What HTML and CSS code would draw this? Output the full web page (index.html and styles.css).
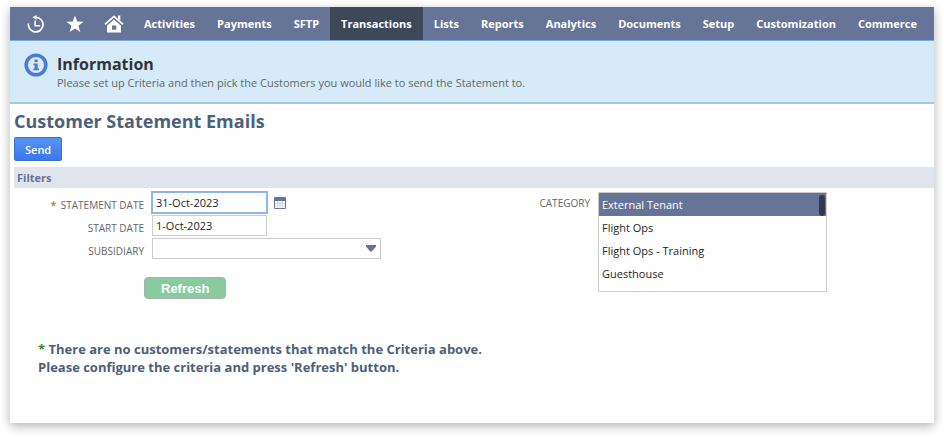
FILE: index.html
```html
<!DOCTYPE html>
<html lang="en">
<head>
<meta charset="utf-8">
<meta name="viewport" content="width=device-width, initial-scale=1">
<title>Customer Statement Emails</title>
<link rel="stylesheet" href="styles.css">
</head>
<body>
<div class="window">
  <nav class="nav" aria-label="Main">
    <a class="nav-icon" href="#" aria-label="Recent records">
      <svg width="18" height="18" viewBox="0 0 18 18" fill="none" stroke="#fff"><path d="M1.500 8.500A7.300 7.300 0 1 0 9 2.300H7" stroke-width="1.700"/><path d="M9.500 0 5.500 2.300 9.500 5z" fill="#fff" stroke="none"/><path d="M8.200 5.500v5.200h5" stroke-width="1.600"/></svg>
    </a>
    <a class="nav-icon" href="#" aria-label="Shortcuts">
      <svg width="18" height="18" viewBox="0 0 18 18" fill="#fff"><path d="M9 .5 11.200 6.600 17.600 6.800 12.500 10.800 14.300 17 9 13.400 3.700 17 5.500 10.800.4 6.800 6.800 6.600z"/></svg>
    </a>
    <a class="nav-icon" href="#" aria-label="Home">
      <svg width="20" height="18" viewBox="0 0 20 18"><path d="M1 9.400 10 1.400l9 8" fill="none" stroke="#fff" stroke-width="1.800"/><path d="M14 .6h2.300v5L14 3.600z" fill="#fff"/><path d="M10 4.500 17 10.700V17.500H3v-6.800zM8 10.500v4.300h4.300v-4.300z" fill="#fff" fill-rule="evenodd"/></svg>
    </a>
    <a class="nav-link" href="#">Activities</a>
    <a class="nav-link" href="#">Payments</a>
    <a class="nav-link" href="#">SFTP</a>
    <a class="nav-link nav-link-active" href="#" aria-current="page">Transactions</a>
    <a class="nav-link" href="#">Lists</a>
    <a class="nav-link" href="#">Reports</a>
    <a class="nav-link" href="#">Analytics</a>
    <a class="nav-link" href="#">Documents</a>
    <a class="nav-link" href="#">Setup</a>
    <a class="nav-link" href="#">Customization</a>
    <a class="nav-link" href="#">Commerce</a>
  </nav>

  <section class="info">
    <svg class="info-icon" width="24" height="24" viewBox="0 0 24 24"><circle cx="12" cy="12" r="9.800" fill="#dbe9fb" stroke="#4c7bd6" stroke-width="3.600"/><path d="M10.500 6.500h3.200v2.600h-3.200zM9.500 10.500h4.200v5h1.300v1.800H9.300v-1.800h1.300v-3.200H9.500z" fill="#4c7bd6"/></svg>
    <div>
      <h2 class="info-title">Information</h2>
      <p class="info-text">Please set up Criteria and then pick the Customers you would like to send the Statement to.</p>
    </div>
  </section>

  <main class="page">
    <h1 class="page-title">Customer Statement Emails</h1>
    <button class="send" type="button">Send</button>
    <h2 class="section-title">Filters</h2>
    <form class="filters">
      <div class="column">
        <div class="row">
          <label class="label" for="statement-date"><span class="required">*</span> STATEMENT DATE</label>
          <input class="field date field-active" id="statement-date" type="text" value="31-Oct-2023">
          <button class="calendar" type="button" aria-label="Pick a date">
            <svg width="12" height="12" viewBox="0 0 12 12"><rect width="12" height="12" rx="1" fill="#66749b"/><path d="M1 4h10v7H1z" fill="#fff"/><path d="M3.500 4v7M6 4v7M8.500 4v7M1 6.300h10M1 8.700h10" stroke="#b4bcd0" stroke-width=".6"/></svg>
          </button>
        </div>
        <div class="row">
          <label class="label" for="start-date">START DATE</label>
          <input class="field date" id="start-date" type="text" value="1-Oct-2023">
        </div>
        <div class="row">
          <label class="label" for="subsidiary">SUBSIDIARY</label>
          <div class="dropdown">
            <select class="field subsidiary" id="subsidiary"><option></option></select>
            <svg class="arrow" width="10" height="7" viewBox="0 0 10 7"><path d="M0 0h10v1.500L5.800 6.500H4.200L0 1.500z" fill="#66749b"/></svg>
          </div>
        </div>
        <button class="refresh" type="button">Refresh</button>
      </div>
      <div class="column category-row">
        <label class="label category-label" for="category">CATEGORY</label>
        <div class="listbox">
          <select class="category" id="category" multiple size="4">
            <option selected>External Tenant</option>
            <option>Flight Ops</option>
            <option>Flight Ops - Training</option>
            <option>Guesthouse</option>
          </select>
          <span class="thumb"></span>
        </div>
      </div>
    </form>
    <p class="message"><span class="star">*</span> There are no customers/statements that match the Criteria above.<br>Please configure the criteria and press 'Refresh' button.</p>
  </main>
</div>
</body>
</html>
```
FILE: styles.css
```css
* {
  box-sizing: border-box;
}

body {
  margin: 0;
  padding: 7px 10px 14px;
  background: #fff;
  font-family: "Open Sans", "Noto Sans", sans-serif;
  font-size: 11px;
  color: #262626;
}

h1, h2, p {
  margin: 0;
}

.window {
  min-height: calc(100vh - 21px);
  background: #fff;
  box-shadow: 0 3px 10px rgba(0, 0, 0, 0.3);
}

.nav {
  display: flex;
  height: 34px;
  padding-left: 6px;
  background: #667497;
  border-bottom: 1px solid #7ea6e0;
}

.nav-icon {
  display: flex;
  flex: none;
  align-items: center;
  justify-content: center;
  width: 39px;
}

.nav-link {
  display: flex;
  align-items: center;
  padding: 0 11px;
  color: #fff;
  font-size: 11px;
  font-weight: 700;
  text-decoration: none;
}

.nav-link-active {
  background: #3d4858;
}

.info {
  display: flex;
  gap: 9px;
  height: 63px;
  padding: 12px 14px 0;
  background: #d5ebfa;
  border-bottom: 2px solid #a8c6e0;
}

.info-icon {
  flex: none;
}

.info-title {
  color: #333;
  font-size: 16px;
  line-height: 22px;
}

.info-text {
  color: #666;
  font-size: 11px;
  line-height: 16px;
}

.page {
  padding: 7px 0 0 4px;
}

.page-title {
  color: #4d5f79;
  font-size: 18px;
  line-height: 20px;
}

.send {
  display: block;
  height: 24px;
  margin: 6px 0;
  padding: 0 10px;
  border: 1px solid #3a6fcb;
  border-radius: 2px;
  background: linear-gradient(#5593f8, #3c78ea);
  color: #fff;
  font: 600 11px "Open Sans", sans-serif;
}

.section-title {
  padding-left: 3px;
  background: #e0e4ed;
  color: #667497;
  font-size: 11px;
  line-height: 21px;
}

.filters {
  display: grid;
  grid-template-columns: 1fr 1fr;
  padding-top: 3px;
}

.row {
  display: flex;
  align-items: center;
  height: 23px;
}

.label {
  width: 130px;
  margin-right: 8px;
  padding-top: 4px;
  color: #666;
  font-size: 10px;
  text-align: right;
}

.required {
  margin-right: 2px;
  color: #c7891a;
  font-weight: 700;
}

.field {
  height: 21px;
  padding: 0 3px;
  border: 1px solid #ccc;
  border-radius: 0;
  background: #fff;
  color: #262626;
  font: 11px "Open Sans", sans-serif;
}

.date {
  width: 115px;
}

.field-active {
  border-color: #5b90d5;
  outline: 2px solid #8db6ec;
  outline-offset: -1px;
}

.calendar {
  display: flex;
  margin-left: 7px;
  padding: 0;
  border: 0;
  background: none;
}

.dropdown,
.listbox {
  position: relative;
  width: 229px;
}

.subsidiary {
  display: block;
  width: 100%;
  appearance: none;
}

.arrow {
  position: absolute;
  top: 7px;
  right: 5px;
  pointer-events: none;
}

.refresh {
  display: block;
  height: 22px;
  margin: 17px 0 0 130px;
  padding: 0 16px;
  border: 1px solid #a9b3ac;
  border-radius: 4px;
  background: #87cb9f;
  color: #fff;
  font: 700 13px "Liberation Sans", Arial, sans-serif;
}

.category-row {
  display: flex;
  align-items: flex-start;
  padding-top: 1px;
}

.category-label {
  width: 116px;
}

.category {
  display: block;
  width: 100%;
  height: 100px;
  padding: 0;
  overflow-y: auto;
  border: 1px solid #ccc;
  border-radius: 0;
  background: #fff;
  color: #262626;
  font: 11px "Open Sans", sans-serif;
  scrollbar-width: none;
}

.category option {
  height: 23px;
  min-height: 23px;
  padding: 4px 3px;
}

.category option:checked {
  background: linear-gradient(#667497, #667497);
  color: #fff;
}

.thumb {
  position: absolute;
  top: 3px;
  right: 2px;
  width: 6px;
  height: 21px;
  border-radius: 3px;
  background: #303a4c;
}

.message {
  margin-top: 41px;
  padding-left: 24px;
  color: #4d5f79;
  font-size: 13px;
  font-weight: 700;
  line-height: 18px;
}

.star {
  color: #2c8a1c;
}
```
